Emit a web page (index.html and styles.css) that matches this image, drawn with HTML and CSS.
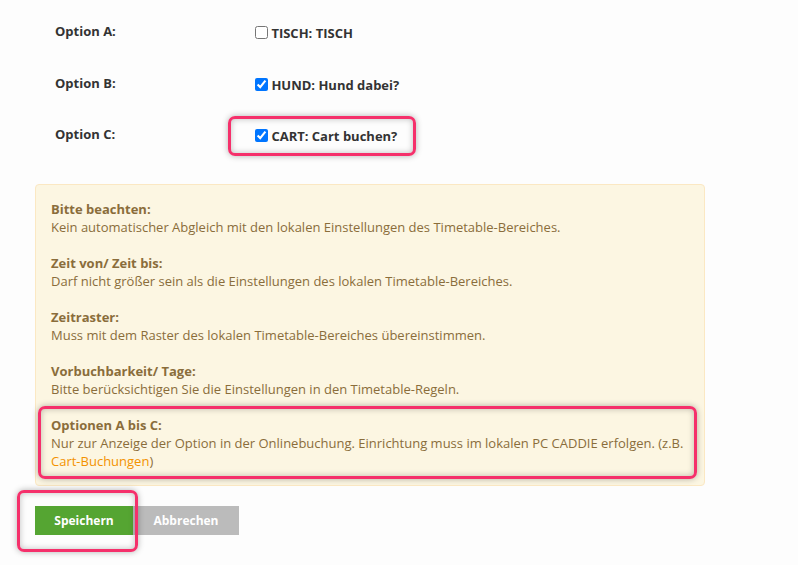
FILE: index.html
```html
<!DOCTYPE html>
<html lang="de">
<head>
  <meta charset="UTF-8">
  <title>Timetable Einstellungen</title>
  <link rel="stylesheet" href="styles.css">
</head>
<body>
  <div class="page">
    <!-- Optionen A-C -->
    <div class="options">
      <div class="option-row">
        <span class="option-label">Option A:</span>
        <label class="check"><input type="checkbox"> TISCH: TISCH</label>
      </div>
      <div class="option-row">
        <span class="option-label">Option B:</span>
        <label class="check"><input type="checkbox" checked> HUND: Hund dabei?</label>
      </div>
      <div class="option-row">
        <span class="option-label">Option C:</span>
        <label class="check marked mark-check"><input type="checkbox" checked> CART: Cart buchen?</label>
      </div>
    </div>

    <!-- Hinweise -->
    <div class="notice">
      <p><strong>Bitte beachten:</strong><br>Kein automatischer Abgleich mit den lokalen Einstellungen des Timetable-Bereiches.</p>
      <p><strong>Zeit von/ Zeit bis:</strong><br>Darf nicht größer sein als die Einstellungen des lokalen Timetable-Bereiches.</p>
      <p><strong>Zeitraster:</strong><br>Muss mit dem Raster des lokalen Timetable-Bereiches übereinstimmen.</p>
      <p><strong>Vorbuchbarkeit/ Tage:</strong><br>Bitte berücksichtigen Sie die Einstellungen in den Timetable-Regeln.</p>
      <p class="marked mark-note"><strong>Optionen A bis C:</strong><br>Nur zur Anzeige der Option in der Onlinebuchung. Einrichtung muss im lokalen PC CADDIE erfolgen. (z.B. <a href="#">Cart-Buchungen</a>)</p>
    </div>

    <div class="actions">
      <span class="marked mark-save"><button class="btn btn-save">Speichern</button></span>
      <button class="btn btn-cancel">Abbrechen</button>
    </div>
  </div>
</body>
</html>
```

FILE: styles.css
```css
html, body {
  margin: 0;
  padding: 0;
  background: #fdfdfd;
  font-family: "Open Sans", "Liberation Sans", sans-serif;
  font-size: 13px;
  line-height: 18px;
  color: #333;
}

.page {
  width: 670px;
  padding: 0 0 30px 35px;
}

/* option rows */
.options {
  padding: 22px 0 0 20px;
}

.option-row {
  display: flex;
  align-items: flex-start;
  height: 51.5px;
}

.option-label {
  width: 196px;
  font-weight: bold;
}

.check {
  padding-top: 2px;
  font-weight: bold;
  color: #333;
}

.check input {
  width: 13px;
  height: 13px;
  margin: 0 0 0 4px;
  vertical-align: -1px;
}

/* notice box */
.notice {
  margin-top: 7px;
  padding: 15px;
  background: #fcf6e2;
  border: 1px solid #fbe8c3;
  border-radius: 4px;
  color: #8a6d3b;
}

.notice p {
  margin: 0 0 18px;
}

.notice p:last-child {
  margin-bottom: 0;
}

.notice a {
  color: #f39200;
  text-decoration: none;
}

/* buttons */
.actions {
  display: flex;
  margin-top: 20px;
}

.mark-save {
  display: flex;
  z-index: 2;
}

.btn {
  border: 0;
  border-radius: 0;
  height: 29px;
  padding: 0;
  font-family: inherit;
  font-size: 12px;
  font-weight: bold;
  color: #fff;
  cursor: pointer;
}

.btn-save {
  width: 98px;
  background: #55a532;
}

.btn-cancel {
  width: 106px;
  background: #bbbbbb;
}

/* red highlight frames */
.marked {
  position: relative;
}

.marked::after {
  content: "";
  position: absolute;
  z-index: 2;
  border: 3px solid #f5306b;
  border-radius: 7px;
  box-shadow: 0 0 6px rgba(0, 0, 0, 0.3), inset 0 0 6px rgba(0, 0, 0, 0.25);
  pointer-events: none;
}

.mark-check::after {
  left: -23px;
  right: -19px;
  top: -9px;
  bottom: -11px;
}

.mark-note::after {
  left: -13px;
  right: -8px;
  top: -10px;
  bottom: -9px;
}

.mark-save::after {
  left: -18px;
  right: -5px;
  top: -16px;
  bottom: -17px;
}
```
